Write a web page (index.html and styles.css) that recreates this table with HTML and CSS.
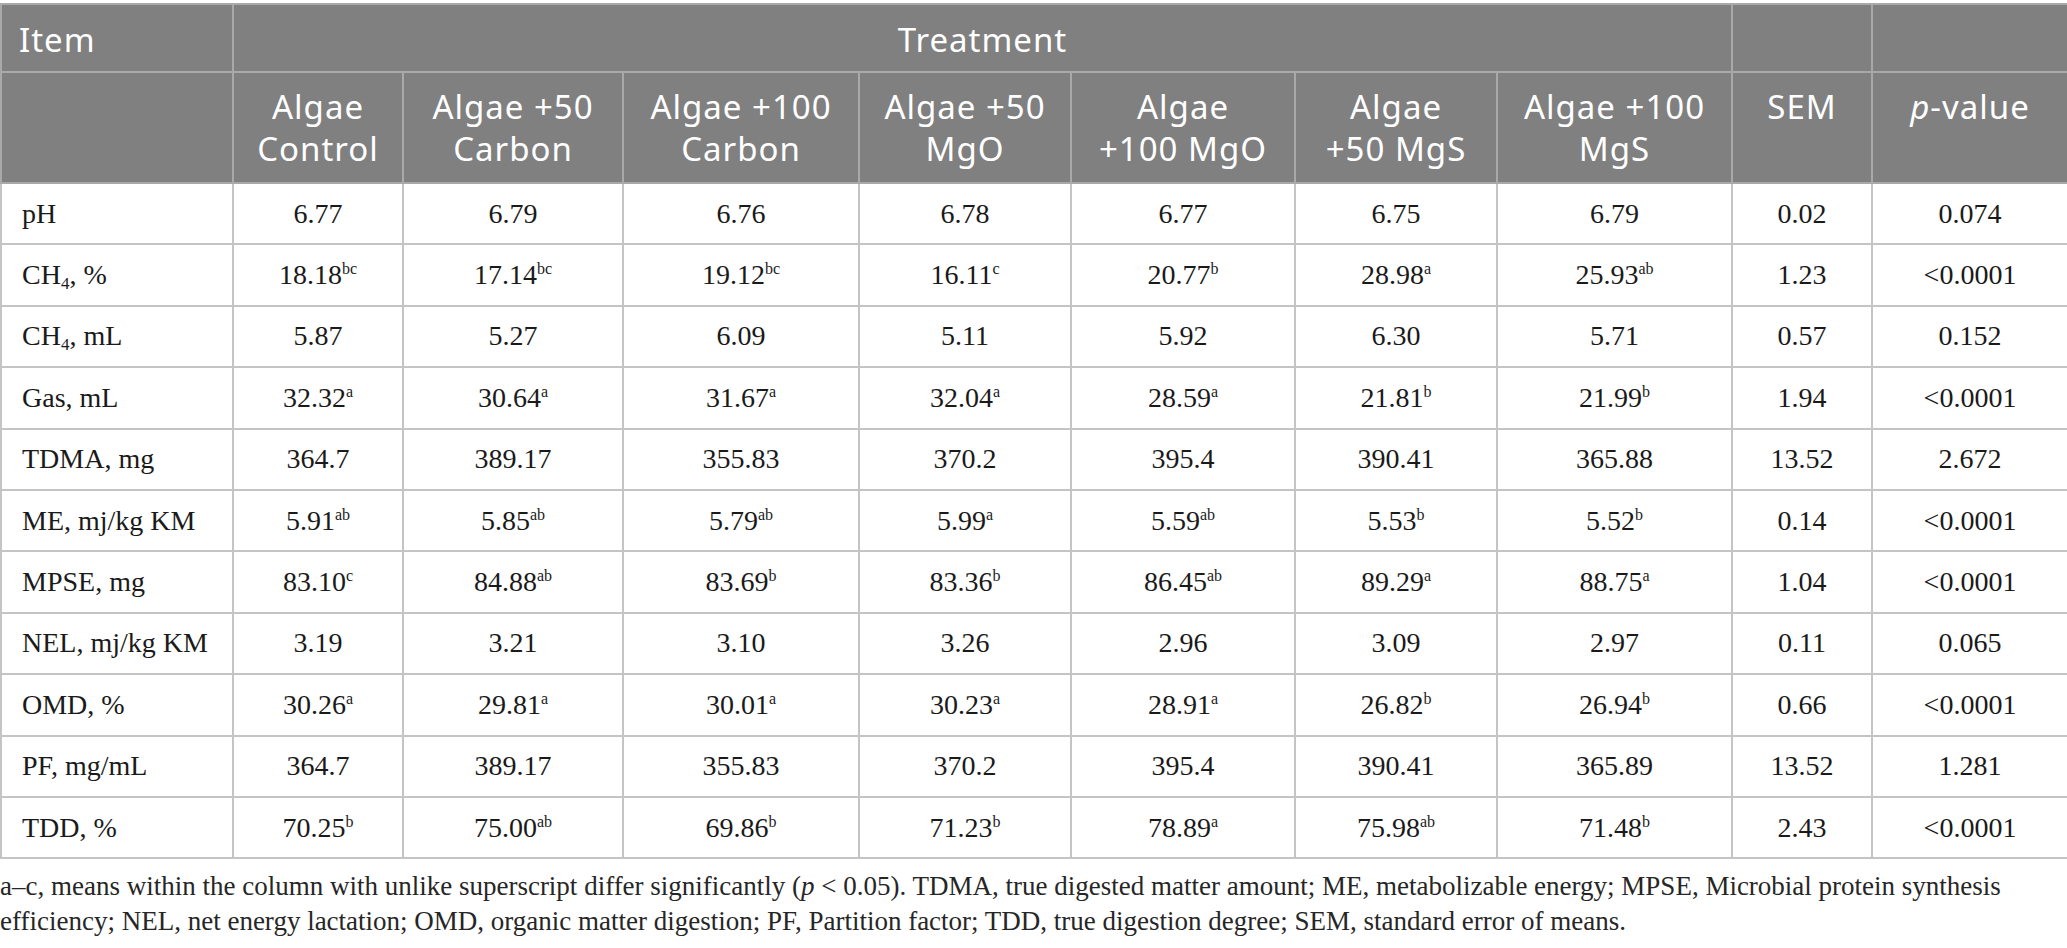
FILE: index.html
```html
<!DOCTYPE html>
<html lang="en">
<head>
<meta charset="utf-8">
<title>Table</title>
<link rel="stylesheet" href="styles.css">
</head>
<body>
<div class="wrap">
<table class="data">
  <colgroup>
    <col class="c-item">
    <col class="c1"><col class="c2"><col class="c3"><col class="c4">
    <col class="c5"><col class="c6"><col class="c7">
    <col class="c-sem"><col class="c-p">
  </colgroup>
  <thead>
    <tr class="h1">
      <th class="left">Item</th>
      <th colspan="7">Treatment</th>
      <th></th>
      <th></th>
    </tr>
    <tr class="h2">
      <th></th>
      <th>Algae<br>Control</th>
      <th>Algae +50<br>Carbon</th>
      <th>Algae +100<br>Carbon</th>
      <th>Algae +50<br>MgO</th>
      <th>Algae<br>+100 MgO</th>
      <th>Algae<br>+50 MgS</th>
      <th>Algae +100<br>MgS</th>
      <th>SEM</th>
      <th><i>p</i>-value</th>
    </tr>
  </thead>
  <tbody>
    <tr><td class="left">pH</td><td>6.77</td><td>6.79</td><td>6.76</td><td>6.78</td><td>6.77</td><td>6.75</td><td>6.79</td><td>0.02</td><td>0.074</td></tr>
    <tr><td class="left">CH<sub>4</sub>, %</td><td>18.18<sup>bc</sup></td><td>17.14<sup>bc</sup></td><td>19.12<sup>bc</sup></td><td>16.11<sup>c</sup></td><td>20.77<sup>b</sup></td><td>28.98<sup>a</sup></td><td>25.93<sup>ab</sup></td><td>1.23</td><td>&lt;0.0001</td></tr>
    <tr><td class="left">CH<sub>4</sub>, mL</td><td>5.87</td><td>5.27</td><td>6.09</td><td>5.11</td><td>5.92</td><td>6.30</td><td>5.71</td><td>0.57</td><td>0.152</td></tr>
    <tr><td class="left">Gas, mL</td><td>32.32<sup>a</sup></td><td>30.64<sup>a</sup></td><td>31.67<sup>a</sup></td><td>32.04<sup>a</sup></td><td>28.59<sup>a</sup></td><td>21.81<sup>b</sup></td><td>21.99<sup>b</sup></td><td>1.94</td><td>&lt;0.0001</td></tr>
    <tr><td class="left">TDMA, mg</td><td>364.7</td><td>389.17</td><td>355.83</td><td>370.2</td><td>395.4</td><td>390.41</td><td>365.88</td><td>13.52</td><td>2.672</td></tr>
    <tr><td class="left">ME, mj/kg KM</td><td>5.91<sup>ab</sup></td><td>5.85<sup>ab</sup></td><td>5.79<sup>ab</sup></td><td>5.99<sup>a</sup></td><td>5.59<sup>ab</sup></td><td>5.53<sup>b</sup></td><td>5.52<sup>b</sup></td><td>0.14</td><td>&lt;0.0001</td></tr>
    <tr><td class="left">MPSE, mg</td><td>83.10<sup>c</sup></td><td>84.88<sup>ab</sup></td><td>83.69<sup>b</sup></td><td>83.36<sup>b</sup></td><td>86.45<sup>ab</sup></td><td>89.29<sup>a</sup></td><td>88.75<sup>a</sup></td><td>1.04</td><td>&lt;0.0001</td></tr>
    <tr><td class="left">NEL, mj/kg KM</td><td>3.19</td><td>3.21</td><td>3.10</td><td>3.26</td><td>2.96</td><td>3.09</td><td>2.97</td><td>0.11</td><td>0.065</td></tr>
    <tr><td class="left">OMD, %</td><td>30.26<sup>a</sup></td><td>29.81<sup>a</sup></td><td>30.01<sup>a</sup></td><td>30.23<sup>a</sup></td><td>28.91<sup>a</sup></td><td>26.82<sup>b</sup></td><td>26.94<sup>b</sup></td><td>0.66</td><td>&lt;0.0001</td></tr>
    <tr><td class="left">PF, mg/mL</td><td>364.7</td><td>389.17</td><td>355.83</td><td>370.2</td><td>395.4</td><td>390.41</td><td>365.89</td><td>13.52</td><td>1.281</td></tr>
    <tr><td class="left">TDD, %</td><td>70.25<sup>b</sup></td><td>75.00<sup>ab</sup></td><td>69.86<sup>b</sup></td><td>71.23<sup>b</sup></td><td>78.89<sup>a</sup></td><td>75.98<sup>ab</sup></td><td>71.48<sup>b</sup></td><td>2.43</td><td>&lt;0.0001</td></tr>
  </tbody>
</table>
<p class="note">a–c, means within the column with unlike superscript differ significantly (<i>p</i> &lt; 0.05). TDMA, true digested matter amount; ME, metabolizable energy; MPSE, Microbial protein synthesis<br>efficiency; NEL, net energy lactation; OMD, organic matter digestion; PF, Partition factor; TDD, true digestion degree; SEM, standard error of means.</p>
</div>
</body>
</html>
```

FILE: styles.css
```css
html, body {
  margin: 0;
  padding: 0;
  background: #ffffff;
}

.wrap {
  padding-top: 3px;
  width: 2067px;
}

.data {
  width: 2067px;
  table-layout: fixed;
  border-collapse: collapse;
  font-family: "Liberation Serif", "Times New Roman", serif;
  font-size: 28px;
  color: #1a1a1a;
}

.c-item { width: 232px; }
.c1 { width: 170px; }
.c2 { width: 220px; }
.c3 { width: 236px; }
.c4 { width: 212px; }
.c5 { width: 224px; }
.c6 { width: 202px; }
.c7 { width: 235px; }
.c-sem { width: 140px; }
.c-p { width: 196px; }

.data th {
  background: #808080;
  color: #ffffff;
  font-family: "Noto Sans", "Open Sans", sans-serif;
  font-weight: 400;
  font-size: 33px;
  letter-spacing: 1px;
  line-height: 41.7px;
  text-align: center;
  border: 2px solid #a9a9a9;
  padding: 0 8px;
}

.data th.left {
  text-align: left;
  padding-left: 17px;
}

.data tr.h1 th {
  height: 63px;
  vertical-align: middle;
  padding-top: 3px;
  padding-bottom: 0;
}

.data tr.h2 th {
  height: 96px;
  vertical-align: top;
  padding-top: 13px;
  padding-bottom: 0;
}

.data td {
  border: 2px solid #c4c4c4;
  text-align: center;
  vertical-align: middle;
  height: 59.4px;
  padding: 0 6px;
  line-height: 30px;
  white-space: nowrap;
}

.data td.left {
  text-align: left;
  padding-left: 20px;
}

.data sup {
  font-size: 16px;
  line-height: 0;
  vertical-align: 10px;
}

.data sub {
  font-size: 17px;
  line-height: 0;
  vertical-align: -5px;
}

.note {
  margin: 10px 0 0 0;
  font-family: "Liberation Serif", "Times New Roman", serif;
  font-size: 27px;
  line-height: 35px;
  color: #262626;
}
```
